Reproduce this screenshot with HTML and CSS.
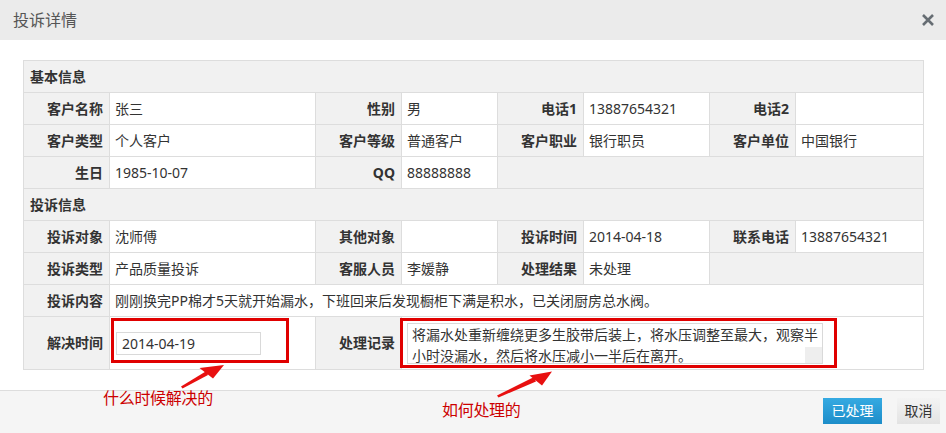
FILE: index.html
```html
<!DOCTYPE html>
<html lang="zh-CN">
<head>
<meta charset="utf-8">
<title>投诉详情</title>
<link rel="stylesheet" href="styles.css">
</head>
<body>
<div class="dialog">
  <div class="dlg-head">
    <span class="dlg-title">投诉详情</span>
    <span class="dlg-close"><svg width="12" height="12" viewBox="0 0 12 12"><path d="M1 1L11 11M11 1L1 11" stroke="#666d73" stroke-width="2.6"/></svg></span>
  </div>
  <div class="dlg-body">
    <table class="grid">
      <colgroup>
        <col class="c-lab"><col class="c-v1"><col class="c-lab"><col class="c-v2"><col class="c-lab"><col class="c-v3"><col class="c-lab"><col class="c-v4">
      </colgroup>
      <tr><th colspan="8" class="sec">基本信息</th></tr>
      <tr><th>客户名称</th><td>张三</td><th>性别</th><td>男</td><th>电话1</th><td>13887654321</td><th>电话2</th><td></td></tr>
      <tr><th>客户类型</th><td>个人客户</td><th>客户等级</th><td>普通客户</td><th>客户职业</th><td>银行职员</td><th>客户单位</th><td>中国银行</td></tr>
      <tr><th>生日</th><td>1985-10-07</td><th>QQ</th><td>88888888</td><th colspan="4"></th></tr>
      <tr><th colspan="8" class="sec">投诉信息</th></tr>
      <tr><th>投诉对象</th><td>沈师傅</td><th>其他对象</th><td></td><th>投诉时间</th><td>2014-04-18</td><th>联系电话</th><td>13887654321</td></tr>
      <tr><th>投诉类型</th><td>产品质量投诉</td><th>客服人员</th><td>李媛静</td><th>处理结果</th><td>未处理</td><th colspan="2"></th></tr>
      <tr><th>投诉内容</th><td colspan="7">刚刚换完PP棉才5天就开始漏水，下班回来后发现橱柜下满是积水，已关闭厨房总水阀。</td></tr>
      <tr class="tall"><th>解决时间</th><td><input class="field" type="text" value="2014-04-19"></td><th>处理记录</th><td colspan="5"><span class="ta-wrap"><textarea class="memo">将漏水处重新缠绕更多生胶带后装上，将水压调整至最大，观察半小时没漏水，然后将水压减小一半后在离开。</textarea><span class="ta-corner"></span></span></td></tr>
    </table>
  </div>
  <div class="dlg-foot">
    <button class="btn btn-primary">已处理</button>
    <button class="btn btn-default">取消</button>
  </div>
  <div class="notes">
    <svg class="notes-svg" width="946" height="433" viewBox="0 0 946 433">
      <rect x="112.5" y="319.5" width="175" height="42" fill="none" stroke="#e00000" stroke-width="3"/>
      <rect x="401.5" y="319.5" width="434" height="47" fill="none" stroke="#e00000" stroke-width="3"/>
      <polygon points="181,386.5 206.5,371 208,375 182.5,388.5" fill="#e81010"/>
      <polygon points="224,365 199.5,368 213,378.5" fill="#e81010"/>
      <polygon points="497,395.5 534,377 536,381.5 498.5,397.5" fill="#e81010"/>
      <polygon points="552,371.5 529.5,375.5 542,385.5" fill="#e81010"/>
    </svg>
    <span class="note note-1">什么时候解决的</span>
    <span class="note note-2">如何处理的</span>
  </div>
</div>
</body>
</html>
```
FILE: styles.css
```css
html, body {
  margin: 0;
  padding: 0;
  background: #ffffff;
}
body {
  font-family: "Noto Sans", "Noto Sans CJK SC", sans-serif;
  font-size: 14px;
  color: #333333;
}
.dialog {
  position: relative;
  width: 946px;
  height: 433px;
  display: flex;
  flex-direction: column;
  background: #ffffff;
  overflow: hidden;
}
.dlg-head {
  height: 40px;
  flex: 0 0 40px;
  background: #ebebeb;
  display: flex;
  align-items: center;
  justify-content: space-between;
  padding: 0 12px 0 13px;
}
.dlg-title {
  font-size: 16px;
  color: #555555;
  line-height: 20px;
}
.dlg-close {
  display: flex;
  width: 12px;
  height: 12px;
  margin-top: -1px;
}
.dlg-body {
  flex: 1 1 auto;
  padding: 20px 23px 0 23px;
}
.grid {
  width: 900px;
  table-layout: fixed;
  border-collapse: collapse;
}
.c-lab { width: 86px; }
.c-v1 { width: 206px; }
.c-v2 { width: 96px; }
.c-v3 { width: 126px; }
.c-v4 { width: 128px; }
.grid th,
.grid td {
  border: 1px solid #dddddd;
  height: 31px;
  padding: 0 5px;
  line-height: 20px;
  white-space: nowrap;
  vertical-align: middle;
}
.grid th {
  background: #f1f1f1;
  text-align: right;
  font-weight: bold;
  color: #333333;
  padding-right: 6px;
}
.grid th.sec {
  text-align: left;
  padding-left: 6px;
}
.grid td {
  background: #ffffff;
  text-align: left;
}
.grid tr.tall th,
.grid tr.tall td {
  height: 52px;
}
.field {
  display: block;
  box-sizing: border-box;
  width: 145px;
  height: 23px;
  margin: 0 0 0 1px;
  padding: 0 5px;
  border: 1px solid #d9d9d9;
  font-family: "Noto Sans", "Noto Sans CJK SC", sans-serif;
  font-size: 14px;
  color: #333333;
  background: #ffffff;
  outline: none;
}
.ta-wrap {
  position: relative;
  display: block;
  width: 416px;
  height: 41px;
  margin-left: 0;
}
.memo {
  display: block;
  box-sizing: border-box;
  width: 416px;
  height: 41px;
  margin: 0;
  padding: 0 0 0 4px;
  border: 1px solid #d9d9d9;
  font-family: "Noto Sans", "Noto Sans CJK SC", sans-serif;
  font-size: 14px;
  line-height: 21px;
  color: #333333;
  resize: none;
  overflow: hidden;
  outline: none;
  white-space: pre-wrap;
}
.ta-corner {
  position: absolute;
  right: 1px;
  bottom: 1px;
  width: 17px;
  height: 16px;
  background: #eeeeee;
}
.dlg-foot {
  flex: 0 0 auto;
  height: 35px;
  border-top: 1px solid #dddddd;
  background: #f5f5f5;
  display: flex;
  justify-content: flex-end;
  align-items: flex-start;
  gap: 15px;
  padding: 7px 6px 0 0;
}
.btn {
  height: 26px;
  padding: 0;
  border: 0;
  font-family: "Noto Sans", "Noto Sans CJK SC", sans-serif;
  font-size: 14px;
  line-height: 26px;
  text-align: center;
  white-space: nowrap;
  cursor: pointer;
}
.btn-primary {
  width: 59px;
  color: #ffffff;
  background: linear-gradient(#35aae2, #1d8dc9);
}
.btn-default {
  width: 43px;
  color: #333333;
  background: linear-gradient(#f3f3f3, #e3e3e3);
}
.notes {
  position: absolute;
  left: 0;
  top: 0;
  width: 946px;
  height: 433px;
  pointer-events: none;
}
.notes-svg {
  position: absolute;
  left: 0;
  top: 0;
}
.note {
  position: absolute;
  font-size: 16px;
  line-height: 20px;
  color: #cc0000;
  white-space: nowrap;
  letter-spacing: -0.3px;
}
.note-1 {
  left: 103px;
  top: 388px;
}
.note-2 {
  left: 442px;
  top: 400px;
}
```
